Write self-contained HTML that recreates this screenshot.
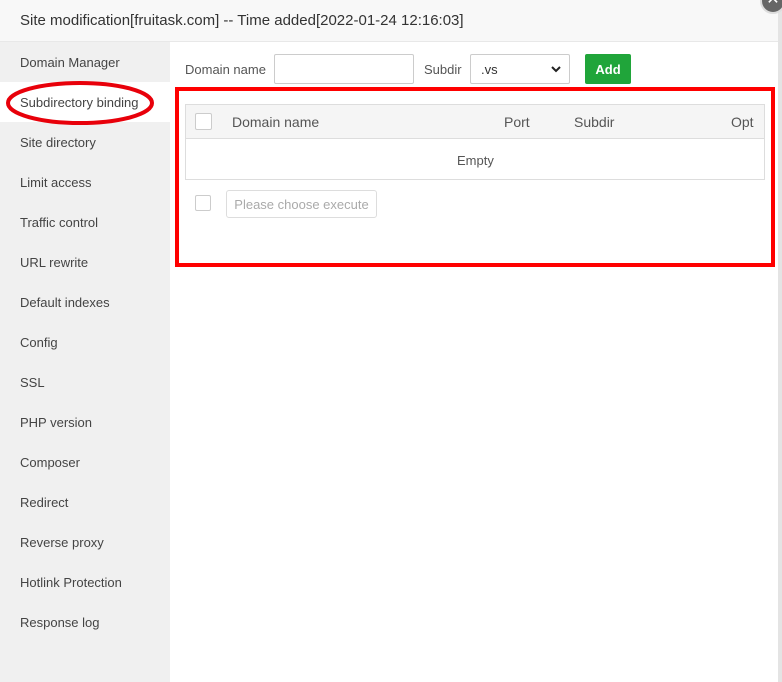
<!DOCTYPE html>
<html><head><style>
*{margin:0;padding:0;box-sizing:border-box}
body{width:782px;height:682px;overflow:hidden;background:#fff;font-family:"Liberation Sans",sans-serif;font-size:13px;color:#555;position:relative}
.hd{position:absolute;left:0;top:0;width:778px;height:42px;background:#f8f8f8;border-bottom:1px solid #e8e8e8;font-size:15px;color:#333;padding-left:20px;line-height:41px}
.close{position:absolute;left:760px;top:-12px;width:26px;height:26px;border-radius:50%;background:#666;border:2px solid #ddd;color:#fff;font-size:16px;line-height:20px;text-align:center}
.edge{position:absolute;left:778px;top:0;width:4px;height:682px;background:#e4e4e4}
.sb{position:absolute;left:0;top:42px;width:170px;height:640px;background:#f0f0f0}
.sb div{height:40px;line-height:42px;padding-left:20px;color:#444}
.sb .on{background:#fff}
.abs{position:absolute}
</style></head><body>
<div class="hd">Site modification[fruitask.com] -- Time added[2022-01-24 12:16:03]</div>
<div class="edge"></div>
<div class="close">✕</div>
<div class="sb">
<div>Domain Manager</div><div class="on">Subdirectory binding</div><div>Site directory</div><div>Limit access</div><div>Traffic control</div><div>URL rewrite</div><div>Default indexes</div><div>Config</div><div>SSL</div><div>PHP version</div><div>Composer</div><div>Redirect</div><div>Reverse proxy</div><div>Hotlink Protection</div><div>Response log</div>
</div>
<svg class="abs" style="left:4px;top:80px" width="152" height="50"><ellipse cx="76" cy="23" rx="72" ry="20" fill="none" stroke="#e8000a" stroke-width="4"/></svg>
<div class="abs" style="left:185px;top:62px">Domain name</div>
<div class="abs" style="left:274px;top:54px;width:140px;height:30px;border:1px solid #ccc;border-radius:2px"></div>
<div class="abs" style="left:424px;top:62px">Subdir</div>
<div class="abs" style="left:470px;top:54px;width:100px;height:30px;border:1px solid #ccc;border-radius:2px;padding:7px 10px;color:#333">.vs<svg style="position:absolute;right:8px;top:10px" width="10" height="8"><path d="M1 2 L5 6 L9 2" fill="none" stroke="#222" stroke-width="2"/></svg></div>
<div class="abs" style="left:585px;top:54px;width:46px;height:30px;background:#20a53a;border-radius:2px;color:#fff;font-weight:bold;text-align:center;line-height:31px">Add</div>
<div class="abs" style="left:175px;top:87px;width:600px;height:180px;border:4px solid #f00"></div>
<div class="abs" style="left:185px;top:104px;width:580px;height:76px;border:1px solid #ddd"></div>
<div class="abs" style="left:186px;top:105px;width:578px;height:34px;background:#f5f5f5;border-bottom:1px solid #ddd"></div>
<div class="abs" style="left:195px;top:113px;width:17px;height:17px;border:1px solid #ccc;background:#fff;border-radius:2px"></div>
<div class="abs" style="left:232px;top:114px;font-size:14px">Domain name</div>
<div class="abs" style="left:504px;top:114px;font-size:14px">Port</div>
<div class="abs" style="left:574px;top:114px;font-size:14px">Subdir</div>
<div class="abs" style="left:731px;top:114px;font-size:14px">Opt</div>
<div class="abs" style="left:457px;top:153px">Empty</div>
<div class="abs" style="left:195px;top:195px;width:16px;height:16px;border:1px solid #ccc;border-radius:2px"></div>
<div class="abs" style="left:226px;top:190px;width:151px;height:28px;border:1px solid #ddd;border-radius:3px;color:#aaa;line-height:28px;text-align:center">Please choose execute</div>
</body></html>
